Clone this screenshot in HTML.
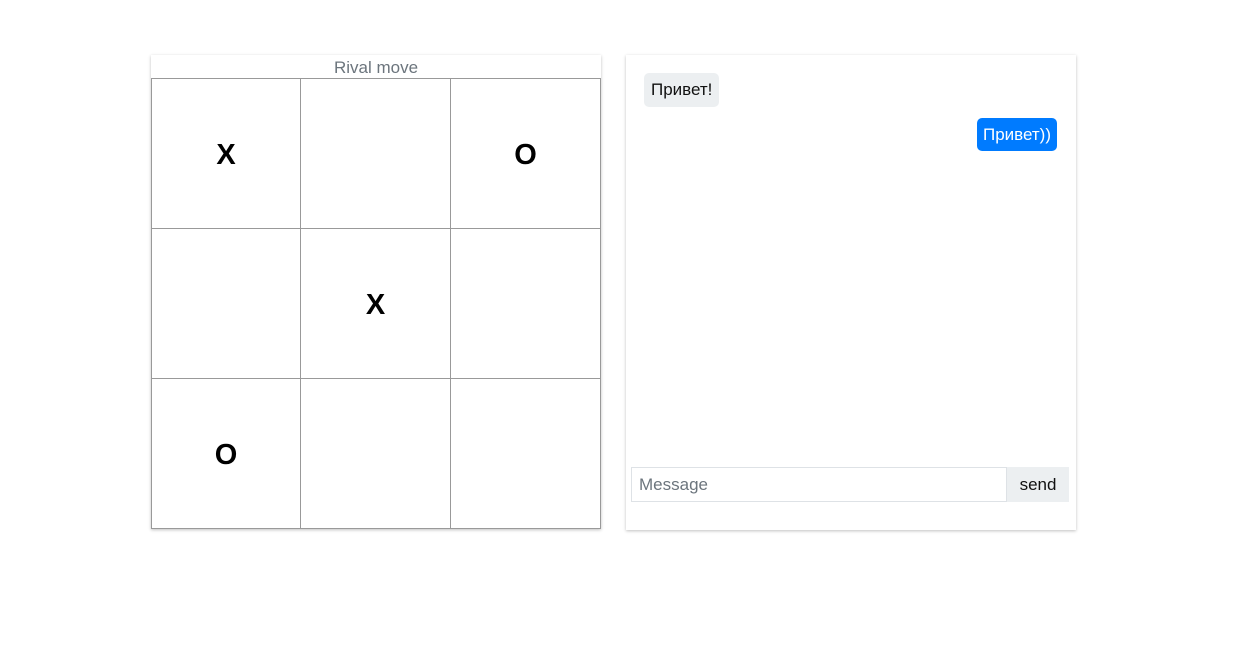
<!DOCTYPE html><html><head><style>
body{margin:0;width:1253px;height:648px;background:#fff;font-family:"Liberation Sans",sans-serif;position:relative}
.card{position:absolute;background:#fff;box-shadow:0 1px 3px rgba(0,0,0,.25)}
.hdr{position:absolute;left:0;top:0;width:450px;height:23px;text-align:center;color:#6c757d;font-size:17px;line-height:26px}
.c{position:absolute;width:150px;height:150px;border-right:1px solid #999;border-bottom:1px solid #999;box-sizing:border-box;display:flex;align-items:center;justify-content:center;font-weight:bold;font-size:29px;padding-top:3px}
.l{border-left:1px solid #999}
.t{border-top:1px solid #999;height:151px}
.b{position:absolute;border-radius:5px;font-size:17px;line-height:32px;padding:0 7px}
</style></head><body>
<div class="card" style="left:151px;top:55px;width:450px;height:474px">
<div class="hdr">Rival move</div>
<div class="c l t" style="left:0;top:23px">X</div>
<div class="c t" style="left:150px;top:23px"></div>
<div class="c t" style="left:300px;top:23px">O</div>
<div class="c l" style="left:0;top:174px"></div>
<div class="c" style="left:150px;top:174px">X</div>
<div class="c" style="left:300px;top:174px"></div>
<div class="c l" style="left:0;top:324px">O</div>
<div class="c" style="left:150px;top:324px"></div>
<div class="c" style="left:300px;top:324px"></div>
</div>
<div class="card" style="left:626px;top:55px;width:450px;height:475px">
<div class="b" style="left:18px;top:18px;background:#eceff1;color:#111;line-height:34px">Привет!</div>
<div class="b" style="right:19px;top:63px;background:#007bff;color:#fff;line-height:33px;padding:0 6px">Привет))</div>
<div style="position:absolute;left:5px;top:412px;width:376px;height:35px;border:1px solid #dee2e6;box-sizing:border-box;color:#6c757d;font-size:17px;line-height:34px;padding-left:7px">Message</div>
<div style="position:absolute;left:381px;top:412px;width:62px;height:35px;background:#eceff1;font-size:17px;line-height:35px;text-align:center;color:#111">send</div>
</div>
</body></html>
